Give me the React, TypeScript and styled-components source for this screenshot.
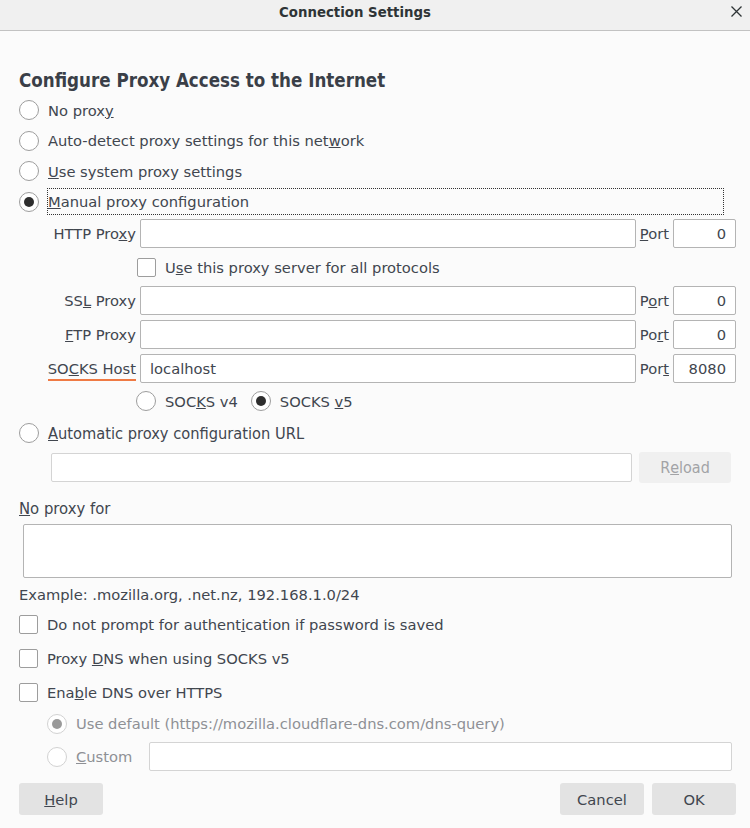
import React from 'react';
import styled, { createGlobalStyle } from 'styled-components';

const GlobalStyle = createGlobalStyle`
  html, body {
    margin: 0;
    padding: 0;
    background: #fbfbfb;
  }
  body {
    font-family: "DejaVu Sans", "Liberation Sans", sans-serif;
    font-size: 14.7px;
    color: #41464f;
  }
  * { box-sizing: border-box; }
`;

const condensed = `
  font-family: "DejaVu Sans Condensed", "DejaVu Sans", sans-serif;
  font-stretch: condensed;
`;

const Window = styled.div`
  width: 750px;
  height: 828px;
  display: flex;
  flex-direction: column;
  background: #fbfbfb;
  overflow: hidden;
`;

const TitleBar = styled.div`
  height: 31px;
  flex: none;
  background: #f0f0f0;
  border-bottom: 1px solid #c2c2c2;
  position: relative;
  display: flex;
  justify-content: center;
  padding: 2px 40px 0 0;
`;

const Title = styled.div`
  ${condensed}
  font-weight: bold;
  font-size: 14.8px;
  line-height: 20px;
  color: #2e3436;
`;

const CloseButton = styled.span`
  position: absolute;
  right: 7px;
  top: 5px;
  width: 13px;
  height: 13px;
  display: flex;
`;

const Content = styled.div`
  padding: 0 14px 0 19px;
  display: flex;
  flex-direction: column;
`;

const Heading = styled.div`
  ${condensed}
  font-weight: bold;
  font-size: 18.6px;
  line-height: 24px;
  margin-top: 38px;
  margin-bottom: 2px;
  color: #3a3f48;
`;

const Row = styled.div<{ $h?: number; $indent?: number; $top?: number }>`
  display: flex;
  align-items: center;
  height: ${p => p.$h ?? 30.5}px;
  margin-left: ${p => p.$indent ?? 0}px;
  margin-top: ${p => p.$top ?? 0}px;
`;

const Radio = styled.span<{ $checked?: boolean; $disabled?: boolean }>`
  width: 20px;
  height: 20px;
  flex: none;
  border-radius: 50%;
  border: 1px solid ${p => (p.$disabled ? '#d2d2d2' : '#9d9d9d')};
  background: #fff;
  display: inline-flex;
  align-items: center;
  justify-content: center;

  &::after {
    content: '';
    display: ${p => (p.$checked ? 'block' : 'none')};
    width: 10px;
    height: 10px;
    border-radius: 50%;
    background: ${p => (p.$disabled ? '#9a9a9a' : '#2e2e2e')};
  }
`;

const Checkbox = styled.span`
  width: 19px;
  height: 19px;
  flex: none;
  border: 1px solid #9d9d9d;
  border-radius: 2px;
  background: #fff;
`;

const OptionLabel = styled.span<{ $focus?: boolean; $condensed?: boolean; $disabled?: boolean }>`
  display: block;
  margin-left: 8px;
  height: 27px;
  line-height: 25px;
  border: 1px ${p => (p.$focus ? 'dotted #333' : 'solid transparent')};
  flex: ${p => (p.$focus ? 1 : 'none')};
  margin-right: ${p => (p.$focus ? '12px' : '0')};
  white-space: nowrap;
  color: ${p => (p.$disabled ? '#8e9095' : 'inherit')};
  ${p => (p.$condensed ? condensed + 'font-size: 16.3px;' : '')}
`;

const ProxyGrid = styled.div`
  display: grid;
  grid-template-columns: 89px 1fr auto 63px;
  grid-template-rows: 29px 28px 29px 29px 29px 26px;
  column-gap: 4px;
  row-gap: 5px;
  margin: 2px 0 0 28px;
  align-items: center;
`;

const FieldLabel = styled.span<{ $marked?: boolean }>`
  justify-self: end;
  white-space: nowrap;
  ${p =>
    p.$marked
      ? `
    border-bottom: 2px solid #ef7a44;
    line-height: 20px;
    margin-top: 3px;
  `
      : ''}
`;

const PortLabel = styled.span`
  white-space: nowrap;
`;

const Input = styled.div<{ $align?: 'left' | 'right'; $disabled?: boolean }>`
  height: 29px;
  background: #fff;
  border: 1px solid ${p => (p.$disabled ? '#d4d4d4' : '#b4b4b4')};
  border-radius: 2px;
  display: flex;
  align-items: center;
  justify-content: ${p => (p.$align === 'right' ? 'flex-end' : 'flex-start')};
  padding: 0 9px;
  min-width: 0;
`;

const Wide = styled.div<{ $offset?: number }>`
  grid-column: 2 / 5;
  display: flex;
  align-items: center;
  margin-left: ${p => p.$offset ?? 0}px;
`;

const SpacedRadio = styled.span`
  display: flex;
  align-items: center;
  margin-right: 12px;
`;

const UrlRow = styled.div`
  display: flex;
  align-items: center;
  gap: 7px;
  margin: 4px 5px 0 32px;
  height: 31px;

  & > ${Input} {
    flex: 1;
  }
`;

const Button = styled.div<{ $disabled?: boolean; $width?: number }>`
  width: ${p => p.$width ?? 84}px;
  height: ${p => (p.$disabled ? 31 : 32)}px;
  flex: none;
  border-radius: 3px;
  background: ${p => (p.$disabled ? '#f0f0f0' : '#e3e3e3')};
  color: ${p => (p.$disabled ? '#a2a3a6' : '#41464f')};
  display: flex;
  align-items: center;
  justify-content: center;
  ${condensed}
  font-size: 16px;
`;

const PlainButton = styled(Button)`
  font-family: "DejaVu Sans", sans-serif;
  font-stretch: normal;
  font-size: 14.7px;
`;

const Caption = styled.div<{ $top: number }>`
  ${condensed}
  font-size: 16.5px;
  line-height: 20px;
  margin-top: ${p => p.$top}px;
`;

const TextArea = styled.div`
  height: 54px;
  margin: 5px 4px 0 4px;
  background: #fff;
  border: 1px solid #b4b4b4;
  border-radius: 2px;
`;

const Example = styled.div`
  line-height: 20px;
  margin-top: 7px;
`;

const CheckList = styled.div`
  margin-top: 2px;
  display: flex;
  flex-direction: column;
`;

const DohList = styled.div`
  margin-top: -2px;
  display: flex;
  flex-direction: column;
`;

const CustomInput = styled(Input)`
  flex: 1;
  margin: 0 4px 0 16px;
`;

const Footer = styled.div`
  display: flex;
  align-items: center;
  gap: 8px;
  margin-top: 10px;
`;

const Spacer = styled.div`
  flex: 1;
`;

function CloseIcon() {
  return (
    <svg width="13" height="13" viewBox="0 0 13 13">
      <path d="M1.5 1.5 L11.5 11.5 M11.5 1.5 L1.5 11.5" stroke="#2e3436" strokeWidth="1.3" fill="none" />
    </svg>
  );
}

export default function App() {
  return (
    <Window>
      <GlobalStyle />
      <TitleBar>
        <Title>Connection Settings</Title>
        <CloseButton>
          <CloseIcon />
        </CloseButton>
      </TitleBar>
      <Content>
        <Heading>Configure Proxy Access to the Internet</Heading>

        <Row>
          <Radio />
          <OptionLabel>No prox<u>y</u></OptionLabel>
        </Row>
        <Row>
          <Radio />
          <OptionLabel>Auto-detect proxy settings for this net<u>w</u>ork</OptionLabel>
        </Row>
        <Row>
          <Radio />
          <OptionLabel><u>U</u>se system proxy settings</OptionLabel>
        </Row>
        <Row>
          <Radio $checked />
          <OptionLabel $focus><u>M</u>anual proxy configuration</OptionLabel>
        </Row>

        <ProxyGrid>
          <FieldLabel>HTTP Pro<u>x</u>y</FieldLabel>
          <Input />
          <PortLabel><u>P</u>ort</PortLabel>
          <Input $align="right">0</Input>

          <Wide $offset={-3}>
            <Checkbox />
            <OptionLabel>U<u>s</u>e this proxy server for all protocols</OptionLabel>
          </Wide>

          <FieldLabel>SS<u>L</u> Proxy</FieldLabel>
          <Input />
          <PortLabel>P<u>o</u>rt</PortLabel>
          <Input $align="right">0</Input>

          <FieldLabel><u>F</u>TP Proxy</FieldLabel>
          <Input />
          <PortLabel>Po<u>r</u>t</PortLabel>
          <Input $align="right">0</Input>

          <FieldLabel $marked>SO<u>C</u>KS Host</FieldLabel>
          <Input>localhost</Input>
          <PortLabel>Por<u>t</u></PortLabel>
          <Input $align="right">8080</Input>

          <Wide $offset={-4}>
            <SpacedRadio>
              <Radio />
              <OptionLabel>SOC<u>K</u>S v4</OptionLabel>
            </SpacedRadio>
            <SpacedRadio>
              <Radio $checked />
              <OptionLabel>SOCKS <u>v</u>5</OptionLabel>
            </SpacedRadio>
          </Wide>
        </ProxyGrid>

        <Row $h={30} $top={4}>
          <Radio />
          <OptionLabel $condensed><u>A</u>utomatic proxy configuration URL</OptionLabel>
        </Row>
        <UrlRow>
          <Input $disabled />
          <Button $disabled $width={92}>R<u>e</u>load</Button>
        </UrlRow>

        <Caption $top={16}><u>N</u>o proxy for</Caption>
        <TextArea />
        <Example>Example: .mozilla.org, .net.nz, 192.168.1.0/24</Example>

        <CheckList>
          <Row $h={34}>
            <Checkbox />
            <OptionLabel>Do not prompt for authent<u>i</u>cation if password is saved</OptionLabel>
          </Row>
          <Row $h={34}>
            <Checkbox />
            <OptionLabel>Proxy <u>D</u>NS when using SOCKS v5</OptionLabel>
          </Row>
          <Row $h={34}>
            <Checkbox />
            <OptionLabel>Ena<u>b</u>le DNS over HTTPS</OptionLabel>
          </Row>
        </CheckList>

        <DohList>
          <Row $h={33} $indent={28}>
            <Radio $checked $disabled />
            <OptionLabel $disabled>Use default (https://mozilla.cloudflare-dns.com/dns-query)</OptionLabel>
          </Row>
          <Row $h={33} $indent={28}>
            <Radio $disabled />
            <OptionLabel $disabled><u>C</u>ustom</OptionLabel>
            <CustomInput $disabled />
          </Row>
        </DohList>

        <Footer>
          <PlainButton><u>H</u>elp</PlainButton>
          <Spacer />
          <PlainButton>Cancel</PlainButton>
          <PlainButton>OK</PlainButton>
        </Footer>
      </Content>
    </Window>
  );
}
